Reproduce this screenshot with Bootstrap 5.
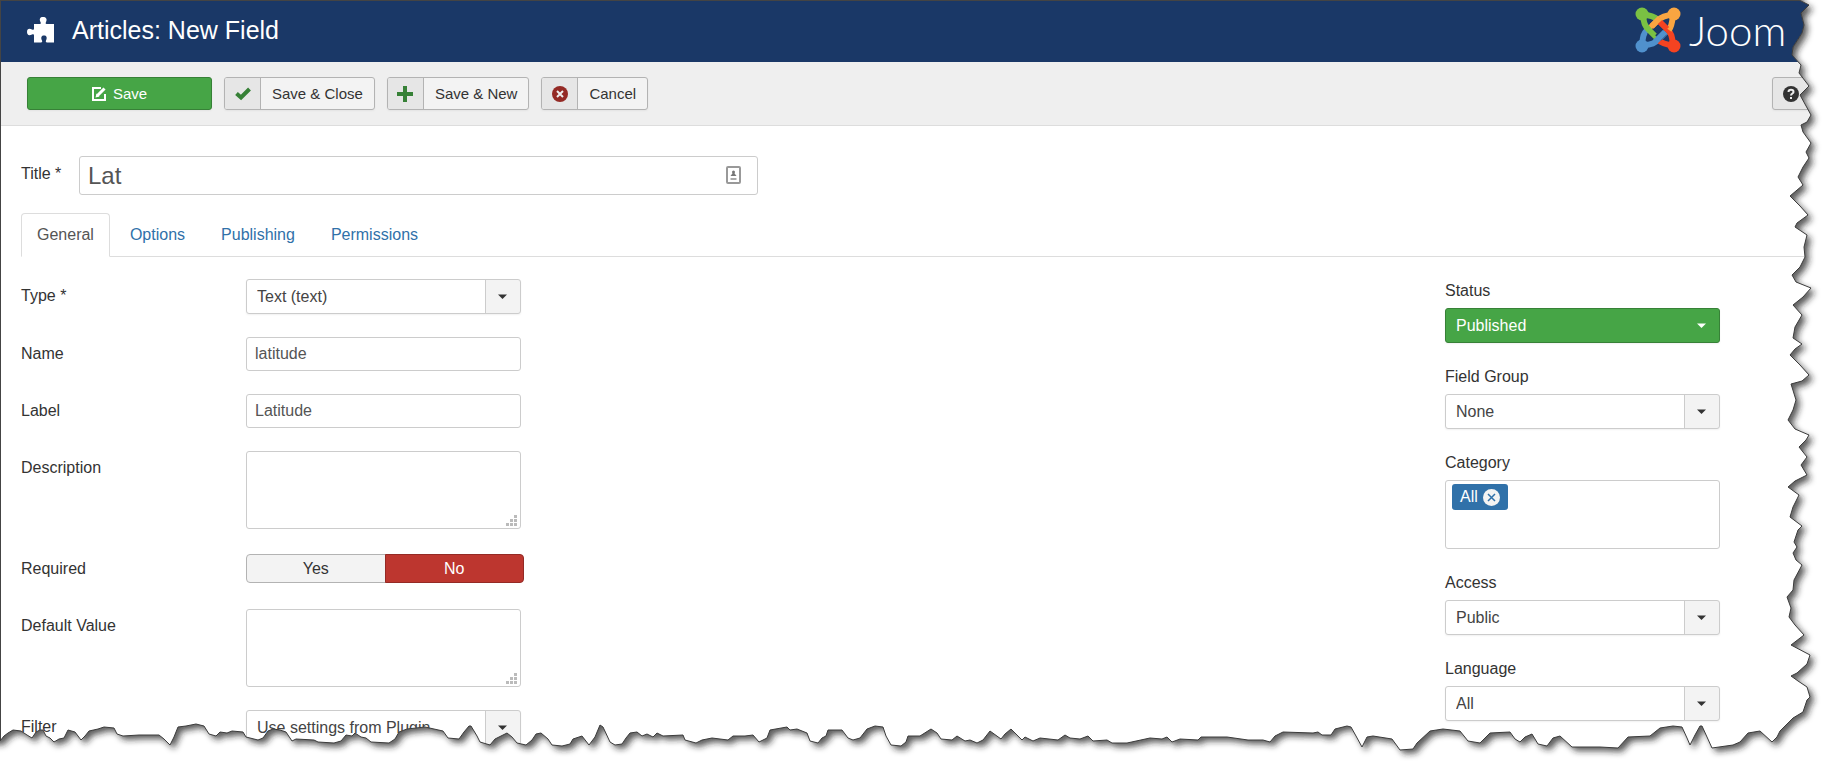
<!DOCTYPE html>
<html lang="en">
<head>
<meta charset="utf-8">
<meta name="viewport" content="width=device-width, initial-scale=1">
<title>Articles: New Field</title>
<link href="https://cdn.jsdelivr.net/npm/bootstrap@5.3.0/dist/css/bootstrap.min.css" rel="stylesheet">
<style>
  body { font-family: "Liberation Sans", Arial, sans-serif; font-size: 16px; line-height: 24px; color: #333; background: #fff; }
  .page-sheet { border-top: 1px solid #444; border-left: 1px solid #444; }
  .admin-header { background: #1a3867; height: 61px; padding: 0 0 4px 26px; }
  .admin-header h1 { font-size: 25px; line-height: 40px; font-weight: 400; color: #fff; margin: 0 0 0 18px; }
  .brand-word { font-family: Lato, sans-serif; font-weight: 300; font-size: 42px; line-height: 40px; color: #fff; }
  .brand-logo { width: 198px; }
  .toolbar { background: #efefef; border-bottom: 1px solid #ddd; height: 64px; padding-left: 26px; }
  .tool-btn { height: 33px; padding: 0; font-size: 15px; line-height: 31px; color: #333; background: #f3f3f3; border: 1px solid #b3b3b3; border-radius: 3px; box-shadow: 0 1px 2px rgba(0,0,0,.05); overflow: hidden; }
  .tool-btn:hover { background: #e6e6e6; }
  .tool-icon { width: 36px; background: #e6e6e6; border-right: 1px solid #b3b3b3; }
  .tool-label { padding: 0 11px; }
  .btn-apply { width: 185px; gap: 6px; background: #46a546; border-color: #378137; color: #fff; }
  .btn-apply:hover { background: #378137; color: #fff; }
  .btn-help { width: 61px; padding-left: 10px; background: #e6e6e6; }
  .edit-form { padding: 30px 0 0 20px; }
  .form-control, .form-select { font-size: 16px; line-height: 24px; color: #555; border: 1px solid #ccc; border-radius: 3px; background-color: #fff; }
  .title-row { margin-bottom: 18px; }
  .title-wrap { width: 679px; }
  .title-wrap .form-control { height: 39px; font-size: 24px; padding: 0 8px; }
  .title-wrap svg { right: 17px; top: 10px; }
  .title-label { width: 58px; line-height: 35px; }
  .nav-tabs { border-bottom-color: #ddd; }
  .nav-tabs .nav-link { color: #3071a9; padding: 9px 15px; border-radius: 4px 4px 0 0; margin-right: 4px; }
  .nav-tabs .nav-link.active { color: #555; border-color: #ddd #ddd #fff; }
  .tab-body { padding-top: 22px; }
  .field-row { margin-bottom: 23px; }
  .field-label { width: 225px; line-height: 34px; }
  .control-box { width: 275px; }
  .control-box .form-control { height: 34px; padding: 0 8px; }
  .control-box textarea.form-control { height: 78px; resize: none; }
  .grip { right: 4px; bottom: 3px; }
  .form-select { height: 35px; padding: 0 40px 0 10px; color: #444; box-shadow: 0 1px 2px rgba(0,0,0,.06);
    background-image: url("data:image/svg+xml,%3Csvg xmlns='http://www.w3.org/2000/svg' width='35' height='40'%3E%3Cpath d='M0 0h35v40H0z' fill='%23f3f3f3'/%3E%3Cpath d='M0 0h1v40H0z' fill='%23ccc'/%3E%3Cpath d='M13 18h9l-4.500 4.500z' fill='%23333'/%3E%3C/svg%3E");
    background-position: right center; background-size: 35px 40px; }
  .select-published { background-color: #46a546; border-color: #378137; color: #fff;
    background-image: url("data:image/svg+xml,%3Csvg xmlns='http://www.w3.org/2000/svg' width='35' height='40'%3E%3Cpath d='M13 18h9l-4.500 4.500z' fill='%23fff'/%3E%3C/svg%3E"); }
  .yes-no { width: 278px; height: 34px; padding: 2px 0 3px; }
  .yes-no .btn { padding: 0; line-height: 27px; color: #333; background: #f3f3f3; border: 1px solid #b3b3b3; border-radius: 4px; }
  .yes-no .btn-check:checked + .btn { background: #bd362f; border-color: #942a25; color: #fff; }
  .side-col { width: 388px; }
  .side-field { margin-bottom: 22px; }
  .side-field label, .side-title { display: block; margin-bottom: 5px; }
  .tag-box { height: 69px; border: 1px solid #ccc; border-radius: 3px; padding: 3px 6px; }
  .tag-chip { height: 26px; padding: 0 8px; gap: 5px; background: #3071a9; color: #fff; border-radius: 3px; line-height: 26px; }
  .torn-edge { inset: 0; pointer-events: none; z-index: 5; }
</style>
</head>
<body>
<div class="position-relative overflow-hidden vh-100">
 <div class="page-sheet min-vh-100">
  <header class="admin-header d-flex align-items-center">
    <svg width="27" height="28" viewBox="0 0 27 28" fill="#fff" aria-hidden="true"><path d="M7 8h6c1 0 1-1 .5-2C12 3 13 1 16 1s4.500 2 3 5c-.5 1-.5 2 .5 2H27v18.500H20c-1 0-1.500-1-1-2 1.500-3 .5-5-2-5s-3.500 2-2 5c.5 1 0 2-1 2H7v-7c0-1.500-1-1.500-2-1-3 1.500-5 .5-5-2.500s2-4 5-2.500c1 .5 2 .5 2-1z"/></svg>
    <h1>Articles: New Field</h1>
    <a href="#" class="brand-logo ms-auto d-flex align-items-center text-decoration-none">
      <svg class="flex-shrink-0 me-2" width="46" height="46" viewBox="0 0 46 46" fill="none" stroke-width="6" aria-hidden="true">
        <path stroke="#5091cd" d="M7 38C8 30 8 27 12 23M8 38C17 38 20 36 24 32L31 25"/>
        <path stroke="#f44321" d="M38 38C37 30 37 27 32 22L25 15M38 38C30 38 26 36 22 32"/>
        <path stroke="#1a3867" stroke-width="8" d="M31 15L26 20"/>
        <path stroke="#f9a541" d="M38 8C30 8 26 10 22 14L15 21M38 8C37 16 37 19 34 23"/>
        <path stroke="#1a3867" stroke-width="8" d="M15 24L20 29"/>
        <path stroke="#7ac143" d="M8 8C9 17 10 19 14 23L22 31M8 8C15 8 19 9 23 13"/>
        <path stroke="#f9a541" d="M25 11L17 19"/>
        <path stroke="#f44321" d="M25 15L32 22"/>
        <path stroke="#1a3867" stroke-width="8" d="M23 31L29 25"/>
        <path stroke="#5091cd" d="M20 35L30 25"/>
        <g stroke="none"><circle cx="7" cy="7" r="6.500" fill="#7ac143"/><circle cx="39" cy="7" r="6.500" fill="#f9a541"/><circle cx="7" cy="39" r="6.500" fill="#5091cd"/><circle cx="39" cy="39" r="6.500" fill="#f44321"/></g>
      </svg>
      <span class="brand-word">Joom</span>
    </a>
  </header>

  <div class="toolbar d-flex align-items-center" role="toolbar" aria-label="Actions">
    <button type="button" class="btn tool-btn btn-apply d-flex align-items-center justify-content-center me-2">
      <svg width="15" height="15" viewBox="0 0 15 15" fill="none" stroke="#fff" aria-hidden="true"><path stroke-width="2" d="M9 2H1v12h12V8"/><path stroke-width="3" d="M5.500 9.500L12.500 2.500"/><path fill="#fff" stroke="none" d="M3.500 11.500l1-4 3 3z"/></svg>Save
    </button>
    <button type="button" class="btn tool-btn d-flex ms-1 me-2">
      <span class="tool-icon d-flex align-items-center justify-content-center align-self-stretch"><svg width="16" height="14" viewBox="0 0 16 14" fill="none" stroke="#378137" stroke-width="4" aria-hidden="true"><path d="M1.500 6.500L6 10.500 14.500 2"/></svg></span>
      <span class="tool-label">Save &amp; Close</span>
    </button>
    <button type="button" class="btn tool-btn d-flex mx-1">
      <span class="tool-icon d-flex align-items-center justify-content-center align-self-stretch"><svg width="16" height="16" viewBox="0 0 16 16" fill="none" stroke="#378137" stroke-width="4" aria-hidden="true"><path d="M8 0v16M0 8h16"/></svg></span>
      <span class="tool-label">Save &amp; New</span>
    </button>
    <button type="button" class="btn tool-btn d-flex ms-2">
      <span class="tool-icon d-flex align-items-center justify-content-center align-self-stretch"><svg width="16" height="16" viewBox="0 0 16 16" aria-hidden="true"><circle cx="8" cy="8" r="8" fill="#942a25"/><path stroke="#eee" stroke-width="2" d="M5 5l6 6M11 5l-6 6"/></svg></span>
      <span class="tool-label">Cancel</span>
    </button>
    <button type="button" class="btn tool-btn btn-help d-flex align-items-center ms-auto flex-shrink-0" aria-label="Help">
      <svg width="16" height="16" viewBox="0 0 16 16" aria-hidden="true"><circle cx="8" cy="8" r="8" fill="#333"/><path fill="none" stroke="#eee" stroke-width="2" d="M5.500 6C5.500 3 10.500 3 10.500 6 10.500 7.500 8 7.500 8 9.500"/><path fill="#eee" d="M7 11h2v2H7z"/></svg>
    </button>
  </div>

  <form class="edit-form">
    <div class="title-row d-flex">
      <label class="title-label" for="f-title">Title *</label>
      <div class="title-wrap position-relative">
        <input type="text" class="form-control" id="f-title" value="Lat">
        <svg class="position-absolute" width="15" height="18" viewBox="0 0 15 18" aria-hidden="true"><rect x="1" y="1" width="13" height="16" rx="1" fill="#fff" stroke="#999" stroke-width="2"/><circle cx="7.500" cy="6" r="1.500" fill="#777"/><path fill="#777" d="M4.500 10l3-4 3 4z"/><path fill="#aaa" d="M4.500 12h6v2h-6z"/></svg>
      </div>
    </div>

    <ul class="nav nav-tabs">
      <li class="nav-item"><a class="nav-link active" aria-current="page" href="#general">General</a></li>
      <li class="nav-item"><a class="nav-link" href="#options">Options</a></li>
      <li class="nav-item"><a class="nav-link" href="#publishing">Publishing</a></li>
      <li class="nav-item"><a class="nav-link" href="#permissions">Permissions</a></li>
    </ul>

    <div class="tab-body d-flex justify-content-between" id="general">
      <div>
        <div class="field-row d-flex"><label class="field-label" for="f-type">Type *</label>
          <div class="control-box"><select class="form-select" id="f-type"><option>Text (text)</option></select></div></div>
        <div class="field-row d-flex"><label class="field-label" for="f-name">Name</label>
          <div class="control-box"><input type="text" class="form-control" id="f-name" value="latitude"></div></div>
        <div class="field-row d-flex"><label class="field-label" for="f-label">Label</label>
          <div class="control-box"><input type="text" class="form-control" id="f-label" value="Latitude"></div></div>
        <div class="field-row d-flex"><label class="field-label" for="f-desc">Description</label>
          <div class="control-box position-relative"><textarea class="form-control" id="f-desc"></textarea>
            <svg class="grip position-absolute" width="11" height="11" viewBox="0 0 11 11" fill="#bbb" aria-hidden="true"><path d="M8 0h3v3H8zM8 4h3v3H8zM4 4h3v3H4zM8 8h3v3H8zM4 8h3v3H4zM0 8h3v3H0z"/></svg></div></div>
        <div class="field-row d-flex"><span class="field-label" id="req-label">Required</span>
          <div class="yes-no btn-group" role="group" aria-labelledby="req-label">
            <input type="radio" class="btn-check" name="required" id="req-yes"><label class="btn w-50" for="req-yes">Yes</label>
            <input type="radio" class="btn-check" name="required" id="req-no" checked><label class="btn w-50" for="req-no">No</label>
          </div></div>
        <div class="field-row d-flex"><label class="field-label" for="f-default">Default Value</label>
          <div class="control-box position-relative"><textarea class="form-control" id="f-default"></textarea>
            <svg class="grip position-absolute" width="11" height="11" viewBox="0 0 11 11" fill="#bbb" aria-hidden="true"><path d="M8 0h3v3H8zM8 4h3v3H8zM4 4h3v3H4zM8 8h3v3H8zM4 8h3v3H4zM0 8h3v3H0z"/></svg></div></div>
        <div class="d-flex"><label class="field-label" for="f-filter">Filter</label>
          <div class="control-box"><select class="form-select" id="f-filter"><option>Use settings from Plugin</option></select></div></div>
      </div>

      <aside class="side-col">
        <div class="control-box">
          <div class="side-field"><label for="s-status">Status</label><select class="form-select select-published" id="s-status"><option>Published</option></select></div>
          <div class="side-field"><label for="s-group">Field Group</label><select class="form-select" id="s-group"><option>None</option></select></div>
          <div class="side-field"><span class="side-title">Category</span>
            <div class="tag-box"><span class="tag-chip d-inline-flex align-items-center">All
              <button type="button" class="btn p-0 border-0 d-flex" aria-label="Remove All"><svg width="17" height="17" viewBox="0 0 17 17"><circle cx="8.500" cy="8.500" r="8.500" fill="#f3f3f3"/><path stroke="#3071a9" stroke-width="1.500" d="M5 5l7 7M12 5l-7 7"/></svg></button></span></div></div>
          <div class="side-field"><label for="s-access">Access</label><select class="form-select" id="s-access"><option>Public</option></select></div>
          <div class="side-field"><label for="s-lang">Language</label><select class="form-select" id="s-lang"><option>All</option></select></div>
        </div>
      </aside>
    </div>
  </form>
 </div>

  <!-- Torn paper border along the right and bottom sides -->
  <svg class="torn-edge position-absolute w-100 h-100" viewBox="0 0 1833 771" preserveAspectRatio="none" aria-hidden="true">
    <defs>
      <path id="tear" d="M1799 0L1809 5 1801 13 1804 25 1802 33 1793 47 1792 55 1801 65 1799 73 1809 86 1800 95 1811 115 1807 122 1801 125 1803 132 1811 143 1806 152 1809 158 1803 167 1798 177 1803 185 1790 196 1800 206 1808 215 1797 223 1795 227 1807 235 1804 247 1805 257 1800 267 1792 275 1796 282 1811 288 1803 297 1793 305 1802 315 1795 327 1793 338 1802 344 1795 349 1790 355 1800 365 1809 375 1802 381 1791 384 1796 400 1793 410 1788 420 1795 429 1809 435 1806 440 1799 447 1807 457 1801 465 1807 475 1795 481 1788 487 1799 495 1793 507 1790 517 1802 526 1798 530 1794 542 1797 547 1793 553 1796 560 1802 565 1794 580 1793 590 1787 597 1791 608 1789 617 1795 625 1804 635 1791 645 1810 655 1807 664 1797 673 1791 676 1798 681 1807 687 1810 697 1807 700 1803 712 1793 718 1780 731 1777 737 1772 742 1760 731 1748 733 1740 742 1733 745 1712 748 1707 737 1702 726 1700 726 1695 735 1690 745 1687 738 1682 727 1673 726 1660 728 1650 736 1628 737 1618 748 1600 747 1572 747 1560 736 1553 738 1547 746 1538 744 1532 734 1525 737 1520 742 1515 739 1510 732 1490 733 1480 743 1468 741 1460 731 1443 729 1430 731 1417 743 1413 749 1400 750 1392 739 1373 736 1367 737 1362 747 1356 736 1351 727 1347 726 1335 729 1331 735 1322 735 1318 732 1313 733 1283 732 1275 736 1270 742 1263 740 1248 740 1227 737 1201 737 1198 740 1180 739 1172 742 1167 737 1162 739 1150 738 1127 743 1112 743 1107 740 1093 741 1088 736 1080 739 1070 738 1065 735 1058 740 1040 738 1033 741 1025 737 1022 740 1011 729 1005 734 1001 739 990 731 983 740 977 743 970 740 965 741 957 736 952 740 941 739 937 733 931 729 920 736 908 736 906 742 901 746 891 745 886 736 883 727 875 726 867 729 860 738 853 740 848 738 842 730 828 730 826 736 822 738 818 743 810 741 807 733 797 729 790 730 787 727 770 730 767 738 759 742 753 735 745 736 733 736 728 740 712 738 702 740 696 743 685 740 683 735 663 736 657 733 653 737 647 734 642 736 637 732 630 733 626 738 622 744 615 745 610 742 603 727 600 725 595 737 589 745 582 736 573 739 570 744 562 746 552 745 548 739 541 733 536 734 532 740 526 745 517 743 512 737 507 733 495 739 490 745 480 742 477 736 471 726 469 726 464 732 459 739 448 738 443 731 434 729 425 727 407 729 399 732 395 739 389 743 371 742 366 738 361 737 355 733 352 736 346 735 341 741 334 743 318 742 314 740 296 739 292 741 286 732 280 730 273 729 268 731 263 738 258 740 246 737 243 732 232 731 227 733 220 732 216 736 209 734 204 726 196 724 186 726 178 727 174 737 170 745 164 739 159 735 139 735 123 736 117 734 114 728 104 727 98 729 89 731 85 736 81 740 75 732 68 730 64 738 59 739 54 742 50 738 46 736 43 730 40 730 36 732 32 738 27 735 21 731 13 730 8 733 4 736 0 741"/>
      <clipPath id="outside"><path id="outside-shape"/></clipPath>
      <filter id="soft" x="-5%" y="-5%" width="110%" height="110%"><feGaussianBlur stdDeviation="3"/></filter>
    </defs>
    <g clip-path="url(#outside)">
      <rect width="1833" height="771" fill="#fff"/>
      <path id="paper-shadow" transform="translate(4 4)" fill="#222" fill-opacity="0.750" filter="url(#soft)"/>
    </g>
    <use href="#tear" fill="none" stroke="#3c3c3c" stroke-width="1"/>
  </svg>
</div>
<script src="https://cdn.jsdelivr.net/npm/bootstrap@5.3.0/dist/js/bootstrap.bundle.min.js"></script>
<script>
  // The same tear line bounds the paper, its shadow and the area outside it.
  const tear = document.getElementById('tear').getAttribute('d');
  document.getElementById('outside-shape').setAttribute('d', tear + 'V771H1834V0z');
  document.getElementById('paper-shadow').setAttribute('d', tear + 'H-20V-20H1799z');
</script>
</body>
</html>
